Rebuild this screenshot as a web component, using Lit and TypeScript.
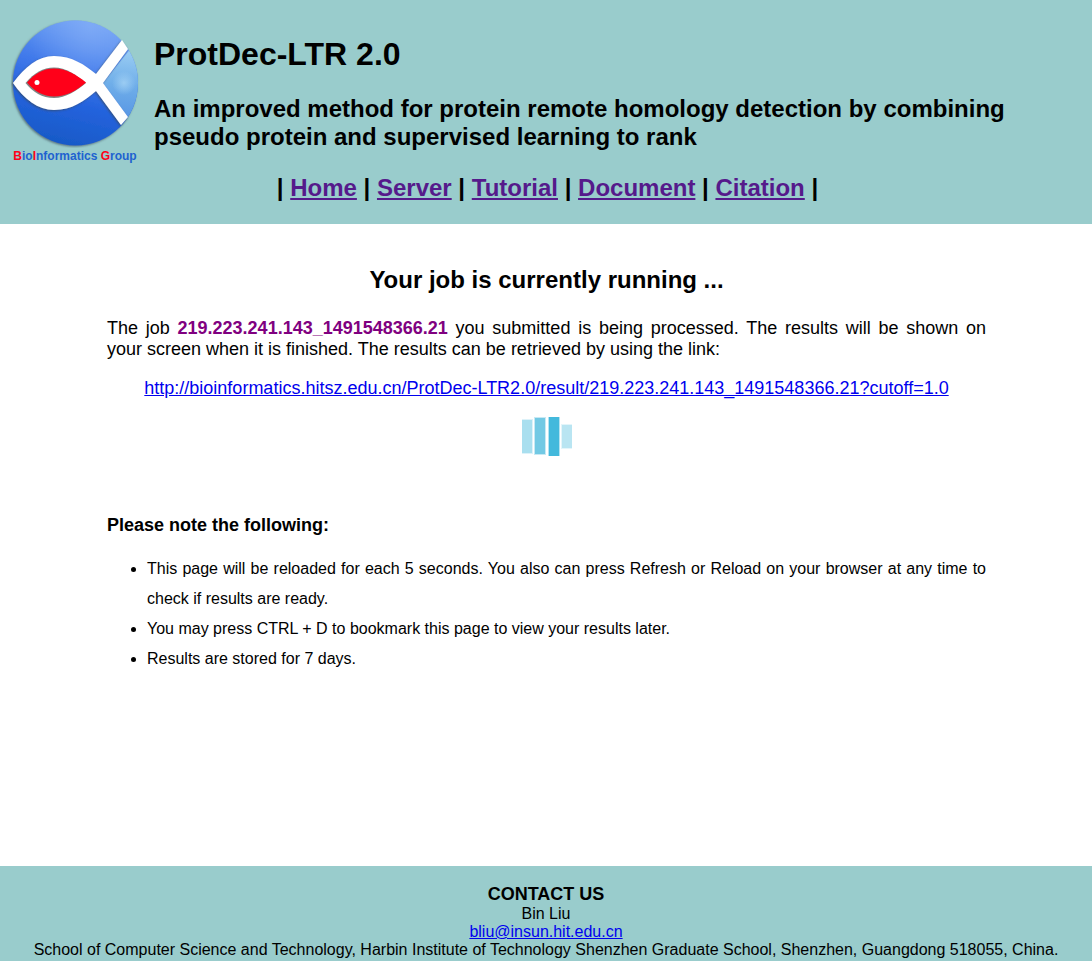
import { LitElement, html, css, svg } from "lit";
import { customElement, property } from "lit/decorators.js";

interface NavEntry {
  label: string;
  href: string;
}

const NAV: NavEntry[] = [
  { label: "Home", href: "#home" },
  { label: "Server", href: "#server" },
  { label: "Tutorial", href: "#tutorial" },
  { label: "Document", href: "#document" },
  { label: "Citation", href: "#citation" },
];

const BARS = [
  { x: -2, y: 2, width: 13, height: 35, color: "#a9dfef" },
  { x: 12, y: 0, width: 12, height: 38, color: "#72c9e4" },
  { x: 26, y: -1, width: 12, height: 41, color: "#43b9dc" },
  { x: 39, y: 7, width: 13, height: 25, color: "#b9e5f2" },
];

@customElement("group-logo")
class GroupLogo extends LitElement {
  static styles = css`
    :host {
      display: flex;
      flex-direction: column;
      align-items: center;
      width: 128px;
    }
    .mark {
      display: block;
      width: 128px;
      height: 128px;
    }
    .name {
      margin: 0;
      font-size: 12px;
      line-height: 16px;
      font-weight: bold;
      white-space: nowrap;
      color: #1e62d0;
    }
    .initial {
      color: #ff0019;
    }
  `;

  render() {
    return html`
      <svg class="mark" viewBox="0 0 128 128" aria-hidden="true">
        <defs>
          <linearGradient id="sea" x1="0.6" y1="0" x2="0.35" y2="1">
            <stop offset="0" stop-color="#6d9ff4" />
            <stop offset="0.4" stop-color="#3f78ea" />
            <stop offset="0.65" stop-color="#2463dd" />
            <stop offset="1" stop-color="#1759c6" />
          </linearGradient>
          <radialGradient id="glow" cx="0.62" cy="0.05" r="0.5">
            <stop offset="0" stop-color="#8bb3f8" stop-opacity="0.6" />
            <stop offset="1" stop-color="#8bb3f8" stop-opacity="0" />
          </radialGradient>
          <linearGradient id="tail" gradientUnits="userSpaceOnUse" x1="118" y1="30" x2="112" y2="100">
            <stop offset="0" stop-color="#9bcdf3" />
            <stop offset="0.5" stop-color="#6faee9" />
            <stop offset="1" stop-color="#5795e4" />
          </linearGradient>
          <radialGradient id="spark" gradientUnits="userSpaceOnUse" cx="113" cy="63" r="12">
            <stop offset="0" stop-color="#a5d3f5" stop-opacity="0.8" />
            <stop offset="1" stop-color="#a5d3f5" stop-opacity="0" />
          </radialGradient>
          <filter id="shade" x="-10%" y="-10%" width="120%" height="120%">
            <feDropShadow dx="-1" dy="1" stdDeviation="1" flood-color="#394a58" flood-opacity="0.7" />
          </filter>
          <clipPath id="disc"><circle cx="64.500" cy="63" r="62.500" /></clipPath>
        </defs>
        <circle cx="64.500" cy="63" r="62.500" fill="url(#sea)" filter="url(#shade)" />
        <g clip-path="url(#disc)">
          <circle cx="64" cy="63" r="63" fill="url(#glow)" />
          <path d="M92 63L128 18V112Z" fill="url(#tail)" />
          <circle cx="113" cy="63" r="12" fill="url(#spark)" />
        </g>
        <g filter="url(#shade)">
          <path
            d="M2 63C14 47 27 36 43 36C61 36 74 45 85 54L111 20L117 29L92 63L117 97L110 105L85 71C73 81 61 90 43 90C27 90 13 79 2 63Z"
            fill="#fff"
          />
        </g>
        <path d="M14.500 63C23 53 32 47.500 43 47.500C55 47.500 65 55 75 63C65 71 55 78 43 78C31 78 22 72 14.500 63Z" fill="#7e8584" />
        <path d="M16 62.500C24 53 33 48.500 43 48.500C55 48.500 65 54.500 75 62.500C65 71 55 76.500 43 76.500C32 76.500 23 71 16 62.500Z" fill="#ff0019" />
        <circle cx="26" cy="62.500" r="2.500" fill="#fff" />
      </svg>
      <p class="name"
        ><span class="initial">B</span>io<span class="initial">I</span>nformatics
        <span class="initial">G</span>roup</p
      >
    `;
  }
}

@customElement("busy-bars")
class BusyBars extends LitElement {
  static styles = css`
    :host {
      display: block;
      width: 50px;
      height: 39px;
    }
    .bars {
      display: block;
      width: 100%;
      height: 100%;
    }
  `;

  render() {
    return html`
      <svg class="bars" viewBox="0 0 50 39" role="img" aria-label="Processing">
        ${BARS.map(
          (b) => svg`
            <rect x=${b.x} y=${b.y} width=${b.width} height=${b.height} fill=${b.color} opacity="0.4" />
            <rect x=${b.x + 1} y=${b.y + 1} width=${b.width - 2} height=${b.height - 2} fill=${b.color} />
          `,
        )}
      </svg>
    `;
  }
}

@customElement("app-root")
class AppRoot extends LitElement {
  @property() job = "219.223.241.143_1491548366.21";

  static styles = css`
    :host {
      display: flex;
      flex-direction: column;
      min-height: 100vh;
      color: #000;
      background: #fff;
      font-family: "Liberation Sans", Arial, sans-serif;
      font-size: 18px;
      line-height: 21px;
    }
    a {
      color: #0000ee;
    }
    .header,
    .footer {
      background: #99cccc;
    }
    .header {
      padding: 20px 8px 22px 11px;
    }
    .banner {
      display: flex;
      align-items: flex-start;
      gap: 15px;
    }
    .titles {
      flex: 1;
      padding-top: 16px;
    }
    .title {
      margin: 0 0 23px;
      font-size: 32px;
      line-height: 36px;
    }
    .subtitle,
    .heading {
      margin: 0;
      font-size: 24px;
      line-height: 28px;
    }
    .nav {
      margin-top: 10px;
      text-align: center;
      font-size: 24px;
      line-height: 28px;
      font-weight: bold;
    }
    .nav a {
      color: #551a8b;
    }
    .main {
      flex: 1;
      box-sizing: border-box;
      width: 100%;
      max-width: 920px;
      margin: 0 auto;
      padding: 42px 20px 20px 21px;
    }
    .heading {
      text-align: center;
      margin-bottom: 24px;
    }
    .text {
      margin: 0 0 18px;
      text-align: justify;
    }
    .job {
      color: #800080;
    }
    .result {
      margin: 0 0 18px;
      text-align: center;
      overflow-wrap: anywhere;
    }
    .busy {
      display: flex;
      justify-content: center;
      margin-bottom: 59px;
    }
    .note {
      margin: 0 0 18px;
      font-size: 18px;
      line-height: 21px;
    }
    .list {
      margin: 0;
      padding-left: 40px;
      font-size: 16px;
      line-height: 30px;
      text-align: justify;
    }
    .footer {
      padding: 18px 16px 2px;
      text-align: center;
      font-size: 16px;
      line-height: 18px;
    }
    .contact {
      margin: 0;
      font-size: 18px;
      line-height: 21px;
    }
    .address {
      font-style: normal;
    }
  `;

  render() {
    const url = `http://bioinformatics.hitsz.edu.cn/ProtDec-LTR2.0/result/${this.job}?cutoff=1.0`;
    return html`
      <header class="header">
        <div class="banner">
          <group-logo></group-logo>
          <div class="titles">
            <h1 class="title">ProtDec-LTR 2.0</h1>
            <h2 class="subtitle">
              An improved method for protein remote homology detection by combining pseudo protein and
              supervised learning to rank
            </h2>
          </div>
        </div>
        <nav class="nav">| ${NAV.map((n) => html`<a href=${n.href}>${n.label}</a> | `)}</nav>
      </header>
      <main class="main">
        <h2 class="heading">Your job is currently running ...</h2>
        <p class="text">
          The job <b class="job">${this.job}</b> you submitted is being processed. The results will be
          shown on your screen when it is finished. The results can be retrieved by using the link:
        </p>
        <p class="result"><a href=${url}>${url}</a></p>
        <div class="busy"><busy-bars></busy-bars></div>
        <h3 class="note">Please note the following:</h3>
        <ul class="list">
          <li>
            This page will be reloaded for each 5 seconds. You also can press Refresh or Reload on your
            browser at any time to check if results are ready.
          </li>
          <li>You may press CTRL + D to bookmark this page to view your results later.</li>
          <li>Results are stored for 7 days.</li>
        </ul>
      </main>
      <footer class="footer">
        <h3 class="contact">CONTACT US</h3>
        <address class="address">
          Bin Liu<br />
          <a href="mailto:bliu@insun.hit.edu.cn">bliu@insun.hit.edu.cn</a><br />
          School of Computer Science and Technology, Harbin Institute of Technology Shenzhen Graduate
          School, Shenzhen, Guangdong 518055, China.
        </address>
      </footer>
    `;
  }
}
